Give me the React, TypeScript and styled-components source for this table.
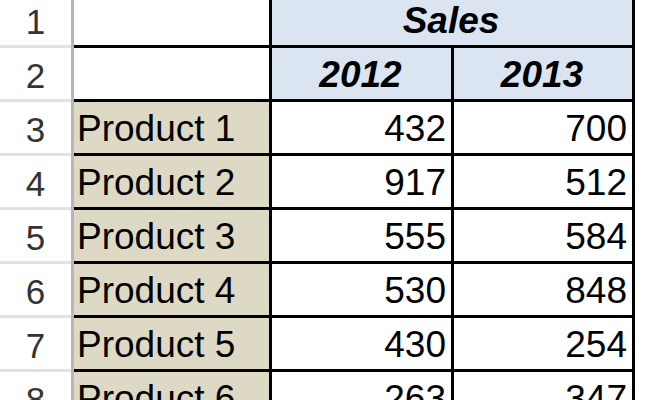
import styled, { createGlobalStyle } from 'styled-components';

const rows = [
  { name: 'Product 1', y2012: 432, y2013: 700 },
  { name: 'Product 2', y2012: 917, y2013: 512 },
  { name: 'Product 3', y2012: 555, y2013: 584 },
  { name: 'Product 4', y2012: 530, y2013: 848 },
  { name: 'Product 5', y2012: 430, y2013: 254 },
  { name: 'Product 6', y2012: 263, y2013: 347 },
];

const App = () => {
  return (
    <>
      <Global />
      <Sheet>
        <RowHeads>
          {[1, 2, 3, 4, 5, 6, 7, 8].map((n) => (
            <RowHead key={n}>{n}</RowHead>
          ))}
        </RowHeads>
        <Grid>
          <Cell />
          <Cell $bg="#dbe5f1" $align="center" $bold $span={2}>
            Sales
          </Cell>
          <Cell />
          <Cell $bg="#dbe5f1" $align="center" $bold>
            2012
          </Cell>
          <Cell $bg="#dbe5f1" $align="center" $bold>
            2013
          </Cell>
          {rows.map((r) => (
            <Row key={r.name}>
              <Cell $bg="#ddd9c4">{r.name}</Cell>
              <Cell $align="flex-end">{r.y2012}</Cell>
              <Cell $align="flex-end">{r.y2013}</Cell>
            </Row>
          ))}
        </Grid>
      </Sheet>
    </>
  );
};

export default App;

const Global = createGlobalStyle`
  html, body {
    margin: 0;
    padding: 0;
    background: #fff;
    overflow: hidden;
  }
  body {
    font-family: "Liberation Sans", Arial, sans-serif;
  }
`;

const Sheet = styled.div`
  display: flex;
  align-items: flex-start;
  width: 650px;
  height: 400px;
  overflow: hidden;
`;

const RowHeads = styled.div`
  display: grid;
  grid-template-rows: 45px repeat(7, 51px);
  row-gap: 3px;
  width: 71px;
  background: #e2e2e2;
  border-right: 3px solid #b6b6b6;
`;

const RowHead = styled.div`
  background: #fff;
  display: flex;
  align-items: flex-end;
  justify-content: center;
  padding-bottom: 3px;
  box-sizing: border-box;
  font-size: 35px;
  line-height: 1.15;
  color: #333;
`;

const Grid = styled.div`
  display: grid;
  grid-template-columns: 195px 179px 178px;
  grid-template-rows: 45px repeat(7, 51px);
  gap: 3px;
  padding-right: 3px;
  background: #000;
`;

const Row = styled.div`
  display: contents;
`;

const Cell = styled.div<{ $bg?: string; $align?: string; $bold?: boolean; $span?: number }>`
  grid-column: span ${(p) => p.$span ?? 1};
  background: ${(p) => p.$bg ?? '#fff'};
  display: flex;
  align-items: flex-end;
  justify-content: ${(p) => p.$align ?? 'flex-start'};
  padding: 0 5px 2px 3px;
  box-sizing: border-box;
  font-size: 37px;
  line-height: 1.15;
  color: #000;
  font-weight: ${(p) => (p.$bold ? 700 : 400)};
  font-style: ${(p) => (p.$bold ? 'italic' : 'normal')};
  white-space: nowrap;
  overflow: hidden;
`;
